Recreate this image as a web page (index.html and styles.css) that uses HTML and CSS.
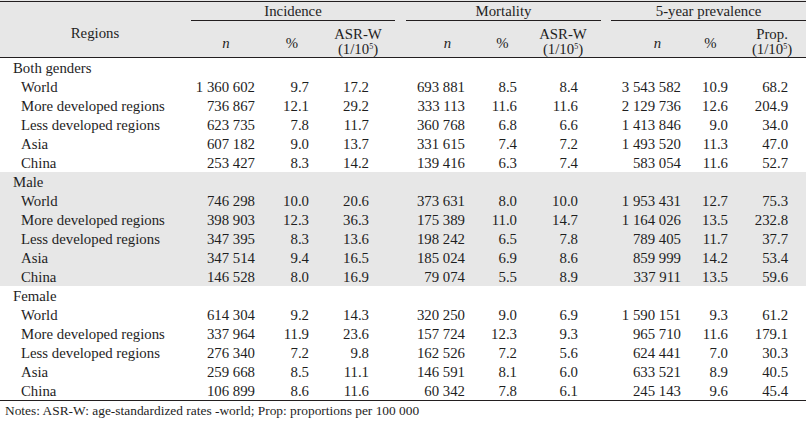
FILE: index.html
```html
<!DOCTYPE html>
<html>
<head>
<meta charset="utf-8">
<link rel="stylesheet" href="styles.css">
</head>
<body>
<table class="data">
  <colgroup>
    <col class="w-reg"><col class="w-c1"><col class="w-c2"><col class="w-c3">
    <col class="w-c4"><col class="w-c5"><col class="w-c6">
    <col class="w-c7"><col class="w-c8"><col class="w-c9">
  </colgroup>
  <thead>
    <tr class="h1">
      <th rowspan="2" class="regions">Regions</th>
      <th colspan="3" class="grp"><div class="grp-label inc">Incidence</div></th>
      <th colspan="3" class="grp"><div class="grp-label mort">Mortality</div></th>
      <th colspan="3" class="grp"><div class="grp-label prev">5-year prevalence</div></th>
    </tr>
    <tr class="h2">
      <th class="c1 single"><i>n</i></th>
      <th class="c2 single">%</th>
      <th class="c3">ASR-W<br>(1/10<sup>5</sup>)</th>
      <th class="c4 single"><i>n</i></th>
      <th class="c5 single">%</th>
      <th class="c6">ASR-W<br>(1/10<sup>5</sup>)</th>
      <th class="c7 single"><i>n</i></th>
      <th class="c8 single">%</th>
      <th class="c9">Prop.<br>(1/10<sup>5</sup>)</th>
    </tr>
  </thead>
  <tbody>
    <tr><td class="grp-name" colspan="10">Both genders</td></tr>
    <tr><td class="reg">World</td><td class="c1">1 360 602</td><td class="c2">9.7</td><td class="c3">17.2</td><td class="c4">693 881</td><td class="c5">8.5</td><td class="c6">8.4</td><td class="c7">3 543 582</td><td class="c8">10.9</td><td class="c9">68.2</td></tr>
    <tr><td class="reg">More developed regions</td><td class="c1">736 867</td><td class="c2">12.1</td><td class="c3">29.2</td><td class="c4">333 113</td><td class="c5">11.6</td><td class="c6">11.6</td><td class="c7">2 129 736</td><td class="c8">12.6</td><td class="c9">204.9</td></tr>
    <tr><td class="reg">Less developed regions</td><td class="c1">623 735</td><td class="c2">7.8</td><td class="c3">11.7</td><td class="c4">360 768</td><td class="c5">6.8</td><td class="c6">6.6</td><td class="c7">1 413 846</td><td class="c8">9.0</td><td class="c9">34.0</td></tr>
    <tr><td class="reg">Asia</td><td class="c1">607 182</td><td class="c2">9.0</td><td class="c3">13.7</td><td class="c4">331 615</td><td class="c5">7.4</td><td class="c6">7.2</td><td class="c7">1 493 520</td><td class="c8">11.3</td><td class="c9">47.0</td></tr>
    <tr><td class="reg">China</td><td class="c1">253 427</td><td class="c2">8.3</td><td class="c3">14.2</td><td class="c4">139 416</td><td class="c5">6.3</td><td class="c6">7.4</td><td class="c7">583 054</td><td class="c8">11.6</td><td class="c9">52.7</td></tr>
  </tbody>
  <tbody class="shaded">
    <tr><td class="grp-name" colspan="10">Male</td></tr>
    <tr><td class="reg">World</td><td class="c1">746 298</td><td class="c2">10.0</td><td class="c3">20.6</td><td class="c4">373 631</td><td class="c5">8.0</td><td class="c6">10.0</td><td class="c7">1 953 431</td><td class="c8">12.7</td><td class="c9">75.3</td></tr>
    <tr><td class="reg">More developed regions</td><td class="c1">398 903</td><td class="c2">12.3</td><td class="c3">36.3</td><td class="c4">175 389</td><td class="c5">11.0</td><td class="c6">14.7</td><td class="c7">1 164 026</td><td class="c8">13.5</td><td class="c9">232.8</td></tr>
    <tr><td class="reg">Less developed regions</td><td class="c1">347 395</td><td class="c2">8.3</td><td class="c3">13.6</td><td class="c4">198 242</td><td class="c5">6.5</td><td class="c6">7.8</td><td class="c7">789 405</td><td class="c8">11.7</td><td class="c9">37.7</td></tr>
    <tr><td class="reg">Asia</td><td class="c1">347 514</td><td class="c2">9.4</td><td class="c3">16.5</td><td class="c4">185 024</td><td class="c5">6.9</td><td class="c6">8.6</td><td class="c7">859 999</td><td class="c8">14.2</td><td class="c9">53.4</td></tr>
    <tr><td class="reg">China</td><td class="c1">146 528</td><td class="c2">8.0</td><td class="c3">16.9</td><td class="c4">79 074</td><td class="c5">5.5</td><td class="c6">8.9</td><td class="c7">337 911</td><td class="c8">13.5</td><td class="c9">59.6</td></tr>
  </tbody>
  <tbody class="last">
    <tr><td class="grp-name" colspan="10">Female</td></tr>
    <tr><td class="reg">World</td><td class="c1">614 304</td><td class="c2">9.2</td><td class="c3">14.3</td><td class="c4">320 250</td><td class="c5">9.0</td><td class="c6">6.9</td><td class="c7">1 590 151</td><td class="c8">9.3</td><td class="c9">61.2</td></tr>
    <tr><td class="reg">More developed regions</td><td class="c1">337 964</td><td class="c2">11.9</td><td class="c3">23.6</td><td class="c4">157 724</td><td class="c5">12.3</td><td class="c6">9.3</td><td class="c7">965 710</td><td class="c8">11.6</td><td class="c9">179.1</td></tr>
    <tr><td class="reg">Less developed regions</td><td class="c1">276 340</td><td class="c2">7.2</td><td class="c3">9.8</td><td class="c4">162 526</td><td class="c5">7.2</td><td class="c6">5.6</td><td class="c7">624 441</td><td class="c8">7.0</td><td class="c9">30.3</td></tr>
    <tr><td class="reg">Asia</td><td class="c1">259 668</td><td class="c2">8.5</td><td class="c3">11.1</td><td class="c4">146 591</td><td class="c5">8.1</td><td class="c6">6.0</td><td class="c7">633 521</td><td class="c8">8.9</td><td class="c9">40.5</td></tr>
    <tr><td class="reg">China</td><td class="c1">106 899</td><td class="c2">8.6</td><td class="c3">11.6</td><td class="c4">60 342</td><td class="c5">7.8</td><td class="c6">6.1</td><td class="c7">245 143</td><td class="c8">9.6</td><td class="c9">45.4</td></tr>
  </tbody>
</table>
<p class="notes">Notes: ASR-W: age-standardized rates -world; Prop: proportions per 100 000</p>
</body>
</html>
```

FILE: styles.css
```css
* { box-sizing: border-box; }

body {
  margin: 0;
  background: #ffffff;
  font-family: "Liberation Serif", "Times New Roman", serif;
  color: #1e1e1e;
}

.data {
  width: 806px;
  table-layout: fixed;
  border-collapse: separate;
  border-spacing: 0;
  font-size: 14.8px;
}

.w-reg { width: 190px; }
.w-c1 { width: 72px; }
.w-c2 { width: 60px; }
.w-c3 { width: 78px; }
.w-c4 { width: 75px; }
.w-c5 { width: 55px; }
.w-c6 { width: 76px; }
.w-c7 { width: 77px; }
.w-c8 { width: 55px; }
.w-c9 { width: 68px; }

.data th {
  font-weight: normal;
  padding: 0;
  background: #e7e7e7;
}

.data .h1 th {
  height: 21px;
  vertical-align: top;
  background: linear-gradient(#231f20, #231f20) 0 1px / 100% 1px no-repeat, #e7e7e7;
}

.data .h1 th.regions {
  vertical-align: middle;
  padding-top: 10px;
  border-bottom: 1px solid #231f20;
}

.grp-label {
  height: 21px;
  padding-top: 2px;
  line-height: 18px;
  border-bottom: 1px solid #231f20;
  text-align: center;
}

.grp-label.inc { margin: 0 5px 0 1px; }
.grp-label.mort { margin: 0 5px 0 6px; }
.grp-label.prev { margin: 0 0 0 5px; }

.data .h2 th {
  height: 37px;
  padding-top: 6px;
  line-height: 15px;
  text-align: center;
  vertical-align: top;
  border-bottom: 1px solid #231f20;
}

.data .h2 th.single {
  padding-top: 15px;
}

.h2 sup {
  font-size: 8px;
  line-height: 0;
  vertical-align: 5px;
}

.data .h2 .c3 { padding-right: 6px; }
.data .h2 .c4 { padding-left: 20px; }
.data .h2 .c6 { padding-right: 10px; }
.data .h2 .c7 { padding-left: 26px; }

.data td {
  height: 19px;
  line-height: 18px;
  padding: 1px 0 0;
  white-space: nowrap;
  text-align: right;
}

.data td.grp-name {
  text-align: left;
  padding-left: 13px;
}

.data td.reg {
  text-align: left;
  padding-left: 21px;
}

.data td.c1 { padding-right: 7px; }
.data td.c2 { padding-right: 13px; }
.data td.c3 { padding-right: 31px; }
.data td.c4 { padding-right: 10px; }
.data td.c5 { padding-right: 13px; }
.data td.c6 { padding-right: 28px; }
.data td.c7 { padding-right: 2px; }
.data td.c8 { padding-right: 10px; }
.data td.c9 { padding-right: 18px; }

.shaded td { background: #e7e7e7; }

.last tr:last-child td {
  height: 20px;
  border-bottom: 1px solid #231f20;
}

.notes {
  margin: 1px 0 0;
  padding-left: 5px;
  font-size: 13.4px;
  line-height: 18px;
}
```
